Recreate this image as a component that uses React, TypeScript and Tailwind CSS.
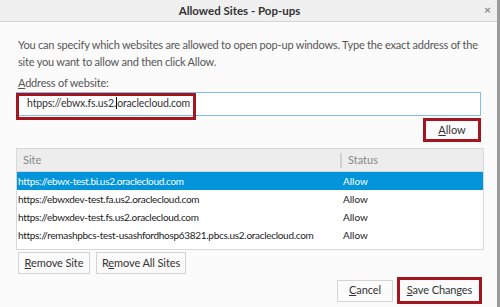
import React from "react";

const font = { fontFamily: 'Lato, "Open Sans", sans-serif' };

function U({ c }: { c: string }) {
  return <span className="underline underline-offset-[1px]">{c}</span>;
}

export default function App() {
  const rows = [
    "https://ebwx-test.bi.us2.oraclecloud.com",
    "https://ebwxdev-test.fa.us2.oraclecloud.com",
    "https://ebwxdev-test.fs.us2.oraclecloud.com",
    "https://remashpbcs-test-usashfordhosp63821.pbcs.us2.oraclecloud.com",
  ];
  const btn = "h-[22px] border border-[#d4d4d4] bg-[#fbfbfb] text-[11px] tracking-[-0.1px] text-[#333] flex items-center justify-center";
  return (
    <div className="w-[500px] h-[307px] overflow-hidden bg-[#fbfbfb] flex flex-col border-r-[3px] border-[#9a9a9a] text-[#3c3c3c]" style={font}>
      <div className="h-[22px] shrink-0 bg-[#f0f0f0] border-b border-[#d6d6d6] relative flex items-center justify-center">
        <span className="text-[11.5px] font-bold text-[#333] ml-[-18px]">Allowed Sites - Pop-ups</span>
        <span className="absolute right-[6px] top-[4px] text-[12px] font-bold text-[#888] leading-none">×</span>
      </div>
      <div className="flex flex-col pl-[16px] pr-[13px]">
        <p className="text-[11px] tracking-[-0.2px] leading-[17px] mt-[14px] text-[#555] px-[2px]">
          You can specify which websites are allowed to open pop-up windows. Type the exact address of the site you want to allow and then click Allow.
        </p>
        <div className="text-[11px] tracking-[-0.2px] mt-[4px] text-[#555] px-[2px] leading-[17px]">
          <U c="A" />ddress of website:
        </div>
        <div className="relative mt-[1px] w-[465px] h-[24px] border border-[#7fbfe9] bg-white flex items-center">
          <span className="text-[10.5px] tracking-[-0.15px] text-[#333] pl-[10px]">htpps://ebwx.fs.us2.<span className="border-l border-black"></span>oraclecloud.com</span>
          <div className="absolute left-[-1px] top-[0px] w-[180px] h-[27px] border-[3px] border-[#a3151f]"></div>
        </div>
        <div className="flex justify-end mt-[2px] pr-[3px]">
          <div className="w-[58px] h-[24px] border-[3px] border-[#a3151f] flex items-center justify-center text-[11px] text-[#333]">
            <span><U c="A" />llow</span>
          </div>
        </div>
        <div className="mt-[6px] w-[468px] h-[102px] border border-[#d8d8d8] bg-white flex flex-col">
          <div className="h-[23px] bg-[#ededed] border-b border-[#d8d8d8] flex items-center text-[11px] text-[#888]">
            <div className="w-[323px] pl-[6px]">Site</div>
            <div className="h-[15px] w-[2px] bg-[#d0d0d0]"></div>
            <div className="pl-[6px]">Status</div>
          </div>
          {rows.map((r, i) => (
            <div key={r} className={"h-[18px] flex items-center text-[10px] " + (i === 0 ? "bg-[#0194db] text-white" : "text-[#222]")}>
              <div className="w-[325px] pl-[1px] whitespace-nowrap overflow-hidden tracking-[-0.3px]">{r}</div>
              <div className="pl-[1px]">Allow</div>
            </div>
          ))}
        </div>
        <div className="flex gap-[6px] mt-[2px] pl-[2px]">
          <button className={btn + " w-[72px]"}><span><U c="R" />emove Site</span></button>
          <button className={btn + " w-[90px]"}><span>R<U c="e" />move All Sites</span></button>
        </div>
        <div className="flex justify-end gap-[4px] mt-[3px] pr-[2px] items-center">
          <button className={btn + " w-[56px]"}><span><U c="C" />ancel</span></button>
          <div className="h-[27px] w-[85px] border-[3px] border-[#a3151f] flex items-center justify-center text-[11px] tracking-[-0.1px] text-[#333]">
            <span><U c="S" />ave Changes</span>
          </div>
        </div>
      </div>
    </div>
  );
}
